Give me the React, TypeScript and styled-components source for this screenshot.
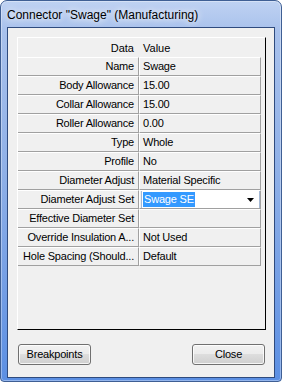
import React from "react";
import styled, { createGlobalStyle } from "styled-components";

const Global = createGlobalStyle`
  html, body { margin: 0; padding: 0; background: #ffffff; }
  body { width: 282px; height: 382px; overflow: hidden; }
  * { box-sizing: border-box; }
`;

const Window = styled.div`
  width: 282px;
  height: 382px;
  display: flex;
  flex-direction: column;
  border: 1px solid #3f5f94;
  border-radius: 7px 7px 4px 4px;
  background: linear-gradient(to bottom, #bfd2f2 0%, #a8c1ec 8%, #8fb0e7 45%, #6f9be4 80%, #5b8fe3 100%);
  box-shadow: inset 0 0 0 1px rgba(255, 255, 255, 0.35);
  overflow: hidden;
`;

const TitleBar = styled.div`
  height: 26px;
  flex: none;
  display: flex;
  align-items: center;
  padding: 1px 0 0 6px;
  font-family: "Liberation Sans", Arial, sans-serif;
  font-size: 12px;
  color: #000;
`;

const TitleText = styled.span`
  text-shadow: 0 0 6px rgba(255, 255, 255, 0.95), 0 0 10px rgba(255, 255, 255, 0.7);
  white-space: nowrap;
`;

const Client = styled.div`
  flex: 1;
  margin: 0 6px 3px 6px;
  border: 1px solid #2f4b7e;
  background: #f0f0f0;
  display: flex;
  flex-direction: column;
  padding: 9px 8px 12px 9px;
  gap: 14px;
`;

const Grid = styled.div`
  height: 293px;
  flex: none;
  border-top: 1px solid #ffffff;
  border-left: 1px solid #ffffff;
  border-right: 1px solid #000000;
  border-bottom: 1px solid #000000;
  background: #f0f0f0;
  display: flex;
  flex-direction: column;
  font-family: "Liberation Sans", Arial, sans-serif;
  font-size: 11px;
  color: #000;
`;

const Row = styled.div`
  display: grid;
  grid-template-columns: 121px 122px;
  height: 19px;
  flex: none;
`;

const HeaderCell = styled.div<{ $label?: boolean }>`
  height: 19px;
  display: flex;
  align-items: center;
  justify-content: ${(p) => (p.$label ? "flex-end" : "flex-start")};
  padding: ${(p) => (p.$label ? "0 5px 0 0" : "0 0 0 4px")};
  white-space: nowrap;
`;

const Cell = styled.div<{ $label?: boolean }>`
  position: relative;
  height: 19px;
  display: flex;
  align-items: center;
  justify-content: ${(p) => (p.$label ? "flex-end" : "flex-start")};
  padding: ${(p) => (p.$label ? "0 4px 1px 0" : "0 0 1px 3px")};
  border-top: 1px solid #ffffff;
  border-left: ${(p) => (p.$label ? "0" : "1px solid #ffffff")};
  border-right: 1px solid #a0a0a0;
  border-bottom: 1px solid #a0a0a0;
  white-space: nowrap;
  overflow: hidden;
  letter-spacing: -0.2px;
`;

const Combo = styled.div`
  position: absolute;
  left: 1px;
  right: 0;
  top: -2px;
  bottom: -2px;
  background: #ffffff;
  border: 1px solid #a6b9d4;
  display: flex;
  align-items: center;
  padding: 0 0 0 1px;
`;

const Selected = styled.span`
  background: #3399ff;
  color: #ffffff;
  padding: 1px 1px 2px 1px;
  letter-spacing: -0.2px;
`;

const Arrow = styled.svg`
  position: absolute;
  right: 5px;
  top: 8px;
`;

const ButtonRow = styled.div`
  display: flex;
  justify-content: space-between;
  padding: 0 1px;
`;

const Button = styled.button`
  width: 73px;
  height: 21px;
  padding: 0 0 1px 0;
  border: 1px solid #707070;
  border-radius: 3px;
  background: linear-gradient(to bottom, #f2f2f2 0%, #ebebeb 50%, #dddddd 50%, #cfcfcf 100%);
  box-shadow: inset 0 0 0 1px rgba(255, 255, 255, 0.8);
  font-family: "Liberation Sans", Arial, sans-serif;
  font-size: 11px;
  color: #000;
  letter-spacing: -0.2px;
`;

const rows: [string, string][] = [
  ["Name", "Swage"],
  ["Body Allowance", "15.00"],
  ["Collar Allowance", "15.00"],
  ["Roller Allowance", "0.00"],
  ["Type", "Whole"],
  ["Profile", "No"],
  ["Diameter Adjust", "Material Specific"],
  ["Diameter Adjust Set", "__combo__"],
  ["Effective Diameter Set", ""],
  ["Override Insulation A...", "Not Used"],
  ["Hole Spacing (Should...", "Default"],
];

export default function App() {
  return (
    <>
      <Global />
      <Window>
        <TitleBar>
          <TitleText>Connector "Swage" (Manufacturing)</TitleText>
        </TitleBar>
        <Client>
          <Grid>
            <Row>
              <HeaderCell $label>Data</HeaderCell>
              <HeaderCell>Value</HeaderCell>
            </Row>
            {rows.map(([label, value]) => (
              <Row key={label}>
                <Cell $label>{label}</Cell>
                <Cell>
                  {value === "__combo__" ? (
                    <Combo>
                      <Selected>Swage SE</Selected>
                      <Arrow width="7" height="4" viewBox="0 0 7 4">
                        <path d="M0 0 H7 L3.5 4 Z" fill="#000" />
                      </Arrow>
                    </Combo>
                  ) : (
                    value
                  )}
                </Cell>
              </Row>
            ))}
          </Grid>
          <ButtonRow>
            <Button>Breakpoints</Button>
            <Button>Close</Button>
          </ButtonRow>
        </Client>
      </Window>
    </>
  );
}
